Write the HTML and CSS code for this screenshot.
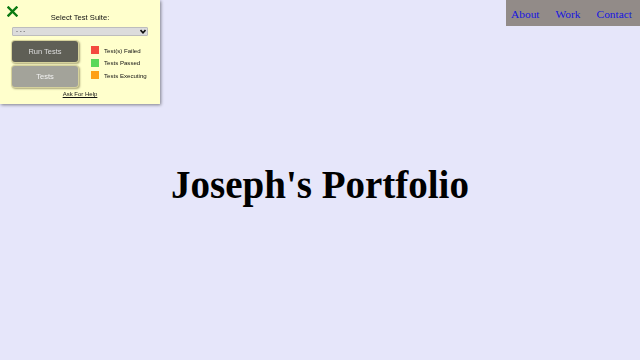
FILE: index.html
```
<!DOCTYPE html>
<html>
<head>
<meta charset="utf-8">
<title>Joseph's Portfolio</title>
<link rel="stylesheet" href="styles.css">
</head>
<body>
<div class="tester">
	<a class="close" href="#"><svg width="11" height="11" viewBox="0 0 11 11"><path d="M1.5 1.5 L9.5 9.5 M9.5 1.5 L1.5 9.5" stroke="#0b7a12" stroke-width="2.4" stroke-linecap="square"/></svg></a>
	<div class="title">Select Test Suite:</div>
	<div class="pick">
		<select><option>- - -</option></select>
		<svg class="arrow" width="6" height="5" viewBox="0 0 6 5"><path d="M0.5 1 L3 3.8 L5.5 1" stroke="#111" stroke-width="1.6" fill="none"/></svg>
	</div>
	<div class="row">
		<div class="buttons">
			<button class="run">Run Tests</button>
			<button class="tests">Tests</button>
		</div>
		<ul class="legend">
			<li><span class="box red"></span>Test(s) Failed</li>
			<li><span class="box green"></span>Tests Passed</li>
			<li><span class="box orange"></span>Tests Executing</li>
		</ul>
	</div>
	<a class="help" href="#">Ask For Help</a>
</div>
<ul class="nav">
	<li><a href="#">About</a></li>
	<li><a href="#">Work</a></li>
	<li><a href="#">Contact</a></li>
</ul>
<div class="main">
	<h1>Joseph's Portfolio</h1>
</div>
</body>
</html>
```
FILE: styles.css
```
*{margin:0;padding:0;box-sizing:border-box;}
ul,li{list-style-type:none;}
body{background:#e6e6fa;font-family:"Liberation Serif","Times New Roman",serif;margin:8px;}

.tester{position:fixed;top:0;left:0;width:160px;height:104px;background:#ffffcc;box-shadow:1px 1px 3px rgba(0,0,0,0.45);padding:13px 12px 0 12px;font-family:"Liberation Sans",Arial,sans-serif;z-index:10;}
.close{position:absolute;left:7px;top:6px;width:11px;height:11px;display:block;}
.close svg{display:block;}
.title{font-size:7.6px;line-height:10px;text-align:center;color:#111;}
.pick{position:relative;margin-top:4px;height:9px;}
.pick select{appearance:none;-webkit-appearance:none;width:136px;height:9px;display:block;background:#dcdcdc;border:1px solid #bdbdbd;border-radius:1px;font-family:"Liberation Sans",Arial,sans-serif;font-size:6px;line-height:7px;padding:0 3px;color:#444;}
.pick .arrow{position:absolute;right:2px;top:2px;}

.row{display:flex;margin-top:5px;}
.buttons{display:flex;flex-direction:column;gap:4px;width:66px;}
.buttons button{height:21px;border:none;border-radius:3px;font-family:"Liberation Sans",Arial,sans-serif;font-size:7.5px;box-shadow:0 0 0 1px #d6d29c,1px 1px 2px 1px #a9a577;}
.run{background:#5f5f56;color:#dedede;}
.tests{background:#a3a39a;color:#f2f2f2;}

.legend{margin-left:13px;padding-top:3px;}
.legend li{display:flex;align-items:center;height:12.6px;font-size:6.1px;color:#111;}
.box{width:8px;height:8px;margin-right:5px;display:block;}
.red{background:#f44b3f;}
.green{background:#5ad85a;}
.orange{background:#fea114;}

.help{display:block;width:max-content;margin:3px auto 0 auto;font-size:6px;line-height:8px;color:#111;text-decoration:underline;}

.nav{position:fixed;top:0;right:0;width:134px;height:26px;background:#928b88;display:flex;justify-content:flex-end;align-items:center;gap:16px;padding:0 8px 1px 0;}
.nav a{color:#1616e0;text-decoration:none;font-size:11.4px;}

.main{height:360px;display:flex;align-items:center;justify-content:center;padding-top:8px;margin:-8px;}
h1{font-size:39px;font-weight:bold;color:#000;}
```
